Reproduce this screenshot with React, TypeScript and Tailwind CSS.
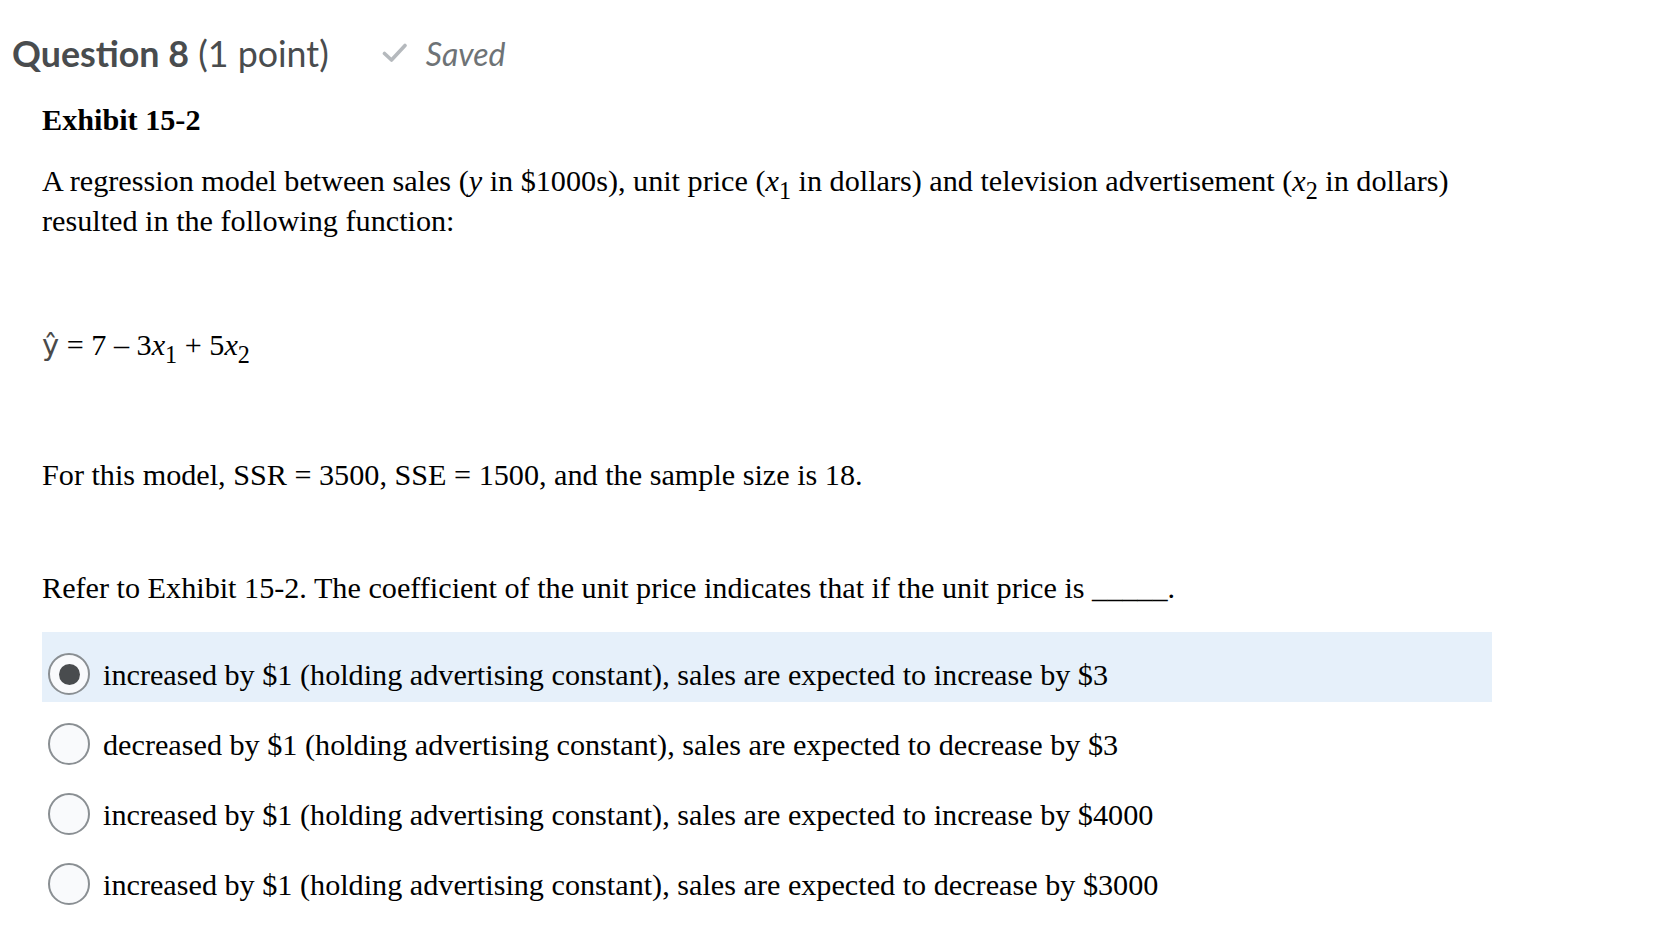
import React from "react";

const serif = { fontFamily: '"Liberation Serif", "Times New Roman", serif' };
const lato = { fontFamily: 'Lato, "Open Sans", sans-serif' };

function Sub({ children }: { children: React.ReactNode }) {
  return <span className="relative top-[0.32em] text-[0.8em]">{children}</span>;
}

function Radio({ checked }: { checked?: boolean }) {
  return (
    <div className="mt-[2px] w-[42px] h-[42px] shrink-0 rounded-full border-2 border-[#8a8f93] bg-[#f9fafc] flex items-center justify-center">
      {checked && <div className="w-[21px] h-[21px] rounded-full bg-[#494c4e]" />}
    </div>
  );
}

const options = [
  { text: "increased by $1 (holding advertising constant), sales are expected to increase by $3", checked: true },
  { text: "decreased by $1 (holding advertising constant), sales are expected to decrease by $3" },
  { text: "increased by $1 (holding advertising constant), sales are expected to increase by $4000" },
  { text: "increased by $1 (holding advertising constant), sales are expected to decrease by $3000" },
];

export default function App() {
  return (
    <div className="w-[1669px] h-[950px] bg-white overflow-hidden">
      <div className="pt-[34px] pl-[12px] flex items-center h-[74px]" style={lato}>
        <h1 className="text-[35.8px] leading-[40px] text-[#494c4e] font-normal whitespace-nowrap">
          <span className="font-bold">Question 8</span> (1 point)
        </h1>
        <div className="ml-[53px] flex items-center">
          <svg width="26" height="22" viewBox="0 0 26 22" className="mt-[-2px]">
            <path d="M2.5 11.5 L9.5 18 L23 3.5" fill="none" stroke="#b5b9bd" strokeWidth="3.6" strokeLinecap="round" strokeLinejoin="round" />
          </svg>
          <span className="ml-[18px] text-[32px] leading-[40px] italic text-[#6e7376]">Saved</span>
        </div>
      </div>

      <div className="pl-[42px] text-black" style={serif}>
        <p className="mt-[27px] text-[30.2px] leading-[38px] font-bold">Exhibit 15-2</p>
        <p className="mt-[23px] text-[30.2px] leading-[38px]">
          A regression model between sales (<i>y</i> in $1000s), unit price (<i>x</i>
          <Sub>1</Sub> in dollars) and television advertisement (<i>x</i>
          <Sub>2</Sub> in dollars)
          <br />
          resulted in the following function:
        </p>
        <p className="mt-[86px] text-[30.2px] leading-[38px]">
          <span className="text-[29px] text-[#4a4a4a]" style={{ fontFamily: '"DejaVu Sans", sans-serif' }}>ŷ</span> = 7 – 3<i>x</i>
          <Sub>1</Sub> + 5<i>x</i>
          <Sub>2</Sub>
        </p>
        <p className="mt-[90px] text-[30.2px] leading-[38px]">
          For this model, SSR = 3500, SSE = 1500, and the sample size is 18.
        </p>
        <p className="mt-[75px] text-[30.2px] leading-[38px]">
          Refer to Exhibit 15-2. The coefficient of the unit price indicates that if the unit price is _____.
        </p>
      </div>

      <div className="ml-[42px] mt-[25px] w-[1450px]" style={serif}>
        {options.map((o, i) => (
          <div
            key={i}
            className={`h-[70px] pt-[19px] pl-[6px] flex items-start ${o.checked ? "bg-[#e6f0fa]" : ""}`}
          >
            <Radio checked={o.checked} />
            <span className="ml-[13px] mt-[5px] text-[30.2px] leading-[38px] text-black whitespace-nowrap">{o.text}</span>
          </div>
        ))}
      </div>
    </div>
  );
}
